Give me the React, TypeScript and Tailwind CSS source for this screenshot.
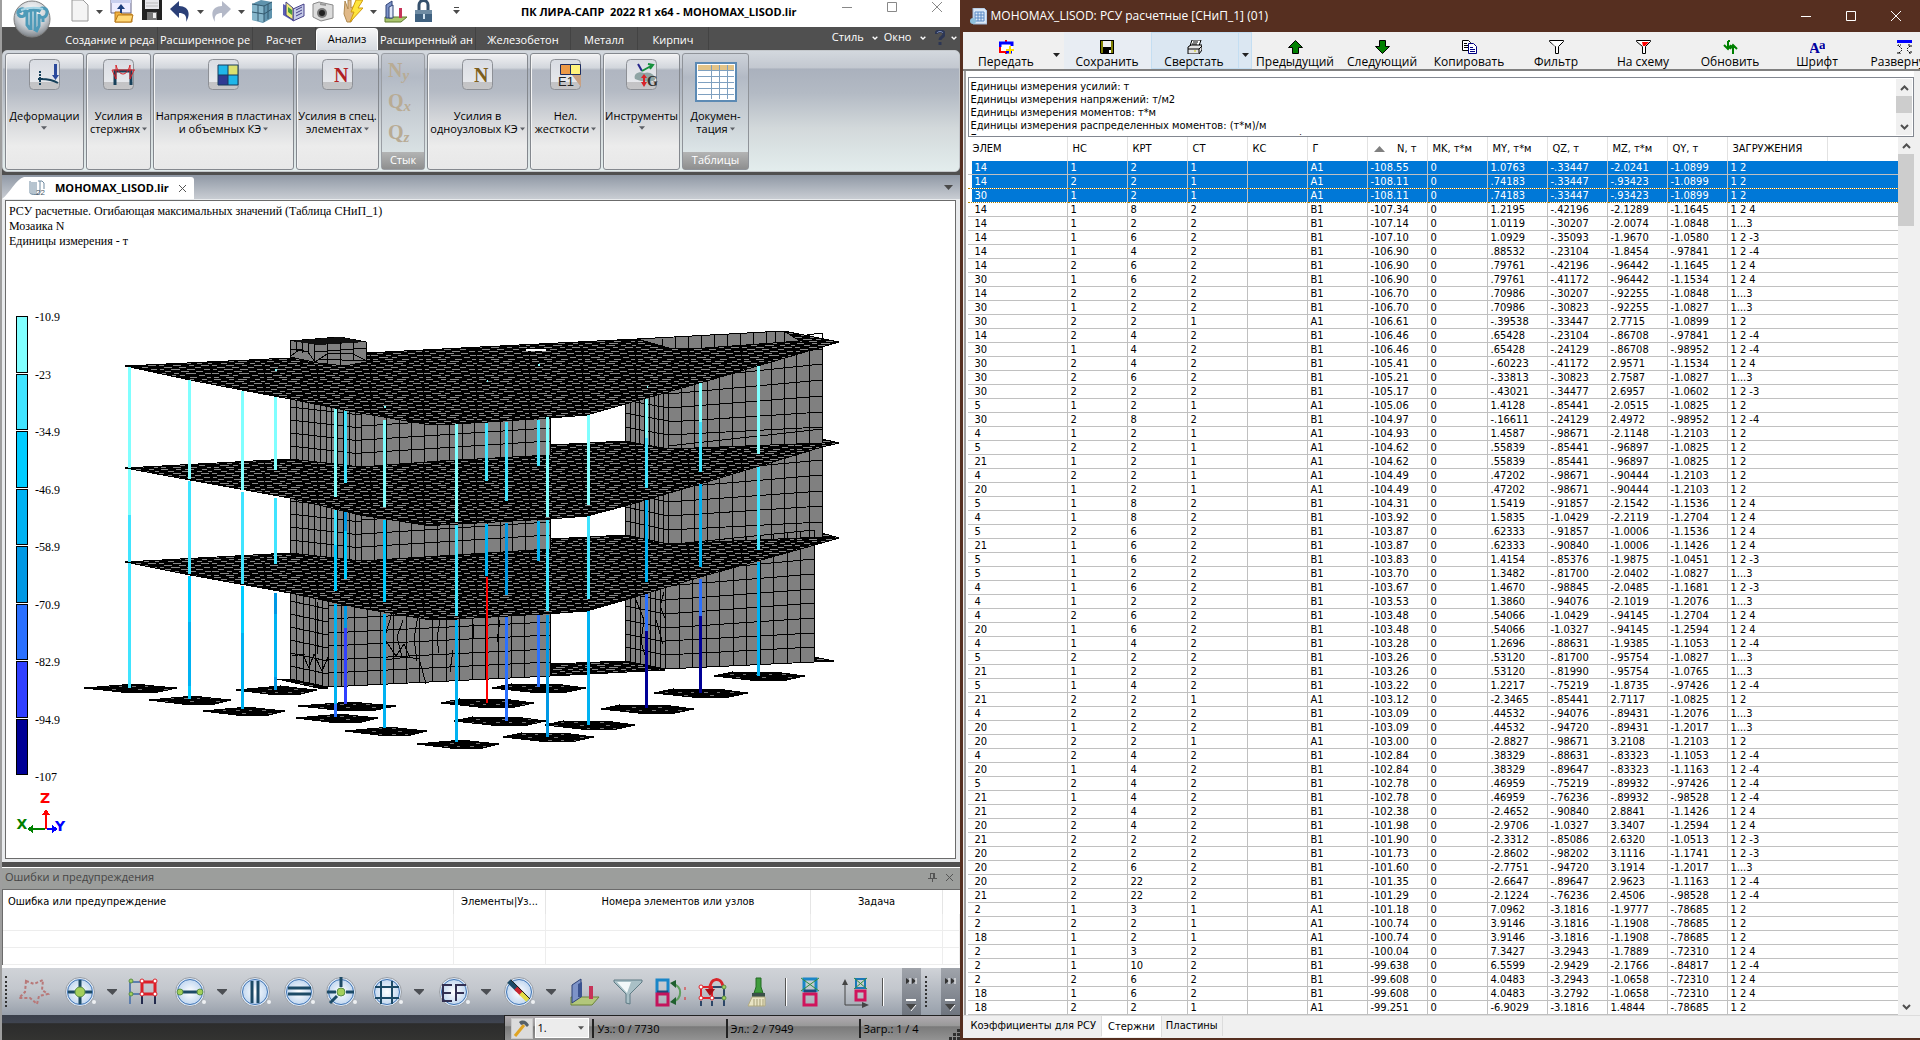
import type { ReactNode } from "react";

type Pt = [number, number];

// ---------- results table ----------

const COLUMNS = ["ЭЛЕМ", "НС", "КРТ", "СТ", "КС", "Г", "N, т", "MK, т*м", "MY, т*м", "QZ, т", "MZ, т*м", "QY, т", "ЗАГРУЖЕНИЯ"];

// элем|нс|крт|ст|г|N|MY|QZ|MZ|QY|загружения
const RAW_ROWS = `14|1|2|1|A1|-108.55|1.0763|-.33447|-2.0241|-1.0899|1 2
14|2|2|1|A1|-108.11|.74183|-.33447|-.93423|-1.0899|1 2
30|1|2|1|A1|-108.11|.74183|-.33447|-.93423|-1.0899|1 2
14|1|8|2|B1|-107.34|1.2195|-.42196|-2.1289|-1.1645|1 2 4
14|1|2|2|B1|-107.14|1.0119|-.30207|-2.0074|-1.0848|1...3
14|1|6|2|B1|-107.10|1.0929|-.35093|-1.9670|-1.0580|1 2 -3
14|1|4|2|B1|-106.90|.88532|-.23104|-1.8454|-.97841|1 2 -4
14|2|6|2|B1|-106.90|.79761|-.42196|-.96442|-1.1645|1 2 4
30|1|6|2|B1|-106.90|.79761|-.41172|-.96442|-1.1534|1 2 4
14|2|2|2|B1|-106.70|.70986|-.30207|-.92255|-1.0848|1...3
30|1|2|2|B1|-106.70|.70986|-.30823|-.92255|-1.0827|1...3
30|2|2|1|A1|-106.61|-.39538|-.33447|2.7715|-1.0899|1 2
14|2|4|2|B1|-106.46|.65428|-.23104|-.86708|-.97841|1 2 -4
30|1|4|2|B1|-106.46|.65428|-.24129|-.86708|-.98952|1 2 -4
30|2|4|2|B1|-105.41|-.60223|-.41172|2.9571|-1.1534|1 2 4
30|2|6|2|B1|-105.21|-.33813|-.30823|2.7587|-1.0827|1...3
30|2|2|2|B1|-105.17|-.43021|-.34477|2.6957|-1.0602|1 2 -3
5|1|2|1|A1|-105.06|1.4128|-.85441|-2.0515|-1.0825|1 2
30|2|8|2|B1|-104.97|-.16611|-.24129|2.4972|-.98952|1 2 -4
4|1|2|1|A1|-104.93|1.4587|-.98671|-2.1148|-1.2103|1 2
5|2|2|1|A1|-104.62|.55839|-.85441|-.96897|-1.0825|1 2
21|1|2|1|A1|-104.62|.55839|-.85441|-.96897|-1.0825|1 2
4|2|2|1|A1|-104.49|.47202|-.98671|-.90444|-1.2103|1 2
20|1|2|1|A1|-104.49|.47202|-.98671|-.90444|-1.2103|1 2
5|1|8|2|B1|-104.31|1.5419|-.91857|-2.1542|-1.1536|1 2 4
4|1|8|2|B1|-103.92|1.5835|-1.0429|-2.2119|-1.2704|1 2 4
5|2|6|2|B1|-103.87|.62333|-.91857|-1.0006|-1.1536|1 2 4
21|1|6|2|B1|-103.87|.62333|-.90840|-1.0006|-1.1426|1 2 4
5|1|6|2|B1|-103.83|1.4154|-.85376|-1.9875|-1.0451|1 2 -3
5|1|2|2|B1|-103.70|1.3482|-.81700|-2.0402|-1.0827|1...3
4|1|6|2|B1|-103.67|1.4670|-.98845|-2.0485|-1.1681|1 2 -3
4|1|2|2|B1|-103.53|1.3860|-.94076|-2.1019|-1.2076|1...3
4|2|6|2|B1|-103.48|.54066|-1.0429|-.94145|-1.2704|1 2 4
20|1|6|2|B1|-103.48|.54066|-1.0327|-.94145|-1.2594|1 2 4
4|1|4|2|B1|-103.28|1.2696|-.88631|-1.9385|-1.1053|1 2 -4
5|2|2|2|B1|-103.26|.53120|-.81700|-.95754|-1.0827|1...3
21|1|2|2|B1|-103.26|.53120|-.81990|-.95754|-1.0765|1...3
5|1|4|2|B1|-103.22|1.2217|-.75219|-1.8735|-.97426|1 2 -4
21|2|2|1|A1|-103.12|-2.3465|-.85441|2.7117|-1.0825|1 2
4|2|2|2|B1|-103.09|.44532|-.94076|-.89431|-1.2076|1...3
20|1|2|2|B1|-103.09|.44532|-.94720|-.89431|-1.2017|1...3
20|2|2|1|A1|-103.00|-2.8827|-.98671|3.2108|-1.2103|1 2
4|2|4|2|B1|-102.84|.38329|-.88631|-.83323|-1.1053|1 2 -4
20|1|4|2|B1|-102.84|.38329|-.89647|-.83323|-1.1163|1 2 -4
5|2|4|2|B1|-102.78|.46959|-.75219|-.89932|-.97426|1 2 -4
21|1|4|2|B1|-102.78|.46959|-.76236|-.89932|-.98528|1 2 -4
21|2|4|2|B1|-102.38|-2.4652|-.90840|2.8841|-1.1426|1 2 4
20|2|4|2|B1|-101.98|-2.9706|-1.0327|3.3407|-1.2594|1 2 4
21|2|2|2|B1|-101.90|-2.3312|-.85086|2.6320|-1.0513|1 2 -3
20|2|2|2|B1|-101.73|-2.8602|-.98202|3.1116|-1.1741|1 2 -3
20|2|6|2|B1|-101.60|-2.7751|-.94720|3.1914|-1.2017|1...3
20|2|22|2|B1|-101.35|-2.6647|-.89647|2.9623|-1.1163|1 2 -4
21|2|22|2|B1|-101.29|-2.1224|-.76236|2.4506|-.98528|1 2 -4
2|1|3|1|A1|-101.18|7.0962|-3.1816|-1.9777|-.78685|1 2
2|2|2|1|A1|-100.74|3.9146|-3.1816|-1.1908|-.78685|1 2
18|1|2|1|A1|-100.74|3.9146|-3.1816|-1.1908|-.78685|1 2
2|1|3|2|B1|-100.04|7.3427|-3.2943|-1.7889|-.72310|1 2 4
2|1|10|2|B1|-99.638|6.5599|-2.9429|-2.1766|-.84817|1 2 -4
2|2|6|2|B1|-99.608|4.0483|-3.2943|-1.0658|-.72310|1 2 4
18|1|6|2|B1|-99.608|4.0483|-3.2792|-1.0658|-.72310|1 2 4
18|2|2|1|A1|-99.251|-6.9029|-3.1816|1.4844|-.78685|1 2`;

const ROWS = RAW_ROWS.split("\n").map((line) => {
  const c = line.split("|");
  // КС is always blank and MK is always zero for these bars
  return [c[0], c[1], c[2], c[3], "", c[4], c[5], "0", c[6], c[7], c[8], c[9], c[10]];
});

const UNITS = `Единицы измерения усилий: т
Единицы измерения напряжений: т/м2
Единицы измерения моментов: т*м
Единицы измерения распределенных моментов: (т*м)/м
Единицы измерения распределенных перерезывающих сил: т/м`;

// ---------- small shared bits ----------

function Caret({ className = "fill-[#4a4a4a]" }: { className?: string }) {
  return (
    <svg width="7" height="4" viewBox="0 0 7 4" className={`inline-block shrink-0 ${className}`}>
      <path d="M0 0h7L3.5 4z" />
    </svg>
  );
}

function Chevron({ up = false, className = "stroke-[#505050]" }: { up?: boolean; className?: string }) {
  return (
    <svg width="9" height="6" viewBox="0 0 9 6" fill="none" strokeWidth="2" className={className}>
      <path d={up ? "M1 5l3.5-3.500L8 5" : "M1 1l3.500 3.500L8 1"} />
    </svg>
  );
}

function Icon({ w = 24, h = 24, children }: { w?: number; h?: number; children: ReactNode }) {
  return (
    <svg width={w} height={h} viewBox={`0 0 ${w} ${h}`} fill="none" className="shrink-0">
      {children}
    </svg>
  );
}

// ---------- 3D view ----------

const C = ["#80ffff", "#40e4ff", "#00ccff", "#00b2f2", "#0098e4", "#2a70ff", "#3040ff", "#000096"];
const LEGEND = ["-10.9", "-23", "-34.9", "-46.9", "-58.9", "-70.9", "-82.9", "-94.9", "-107"];

// [x, [from, to, colour index]...]
const BARS: [number, [number, number, number][]][] = [
  [275, [[397, 470, 0], [498, 564, 1], [593, 614, 4], [614, 677, 3], [677, 690, 4]]],
  [345, [[411, 483, 1], [512, 531, 4], [531, 579, 2], [606, 628, 4], [628, 704, 6]]],
  [486, [[423, 481, 1], [524, 576, 3]]],
  [506, [[422, 501, 1], [523, 595, 4], [617, 721, 5]]],
  [538, [[420, 466, 1], [521, 561, 3], [615, 687, 5]]],
  [129, [[367, 468, 0], [469, 515, 0], [515, 562, 1], [563, 688, 1]]],
  [189, [[380, 479, 0], [481, 574, 1], [576, 622, 2], [622, 686, 3], [686, 699, 2]]],
  [242, [[391, 490, 0], [492, 584, 1], [586, 633, 2], [633, 709, 3]]],
  [335, [[409, 497, 0], [510, 545, 1], [545, 591, 2], [604, 704, 3], [704, 717, 5]]],
  [384, [[420, 507, 0], [520, 602, 2], [614, 728, 3]]],
  [456, [[424, 522, 0], [525, 616, 1], [620, 742, 3]]],
  [547, [[417, 517, 0], [520, 611, 1], [615, 737, 4]]],
  [588, [[415, 505, 0], [516, 599, 1], [611, 725, 3]]],
  [646, [[399, 438, 0], [438, 488, 1], [500, 582, 3], [594, 631, 5], [631, 708, 7]]],
  [700, [[383, 422, 0], [422, 472, 1], [484, 567, 3], [579, 616, 5], [616, 693, 7]]],
  [758, [[366, 454, 0], [467, 550, 1], [562, 676, 3]]],
];

// footing pads: left, right, y
const PADS: [number, number, number][] = [
  [84, 177, 688], [149, 231, 700], [203, 285, 711], [236, 317, 690], [298, 396, 706], [296, 378, 718],
  [345, 427, 731], [417, 499, 744], [441, 534, 703], [454, 546, 721], [492, 586, 688], [503, 594, 737],
  [545, 635, 725], [601, 694, 709], [654, 748, 693], [714, 805, 676],
];

const SLABS = [
  "125,366 290,358 366,353 480,347 637,339 672,349 705,348 800,341 784,331 839,342 822,347 700,383 625,404 587,415 550,418 440,425 425,424 360,413 290,399 242,390 190,380",
  "125,468 290,459 361,467 440,461 550,455 551,445 625,441 668,449 822,443 822,439 839,443 822,447 700,484 625,506 587,516 550,519 440,525 425,525 360,515 290,498 190,480",
  "125,562 290,553 361,561 440,556 550,549 551,539 625,535 668,544 822,537 822,533 839,538 822,543 700,577 625,600 587,611 560,613 440,620 425,619 360,608 290,593 190,575",
  "551,664 625,661 665,670 551,676",
  "277,679 290,680 328,688 318,688",
  "814,657 834,661 814,662",
];

// Regular grid of finite elements on a wall with vertical sides
function mesh([x0, a0, b0]: number[], [x1, a1, b1]: number[], nx: number, ny: number) {
  let d = "";
  for (let i = 0; i <= nx; i++) {
    const t = i / nx;
    const x = Math.round(x0 + (x1 - x0) * t);
    d += `M${x} ${Math.round(a0 + (a1 - a0) * t)}V${Math.round(b0 + (b1 - b0) * t)}`;
  }
  for (let j = 0; j <= ny; j++) {
    const t = j / ny;
    d += `M${x0} ${Math.round(a0 + (b0 - a0) * t)}L${x1} ${Math.round(a1 + (b1 - a1) * t)}`;
  }
  return d;
}

const WALLS: { p: string; d: string }[] = [
  { p: "290,370 361,370 361,467 290,459", d: mesh([290, 381, 459], [361, 389, 467], 12, 6) },
  { p: "361,370 550,370 550,455 361,467", d: mesh([361, 385, 467], [550, 373, 455], 15, 6) },
  { p: "290,480 361,480 361,561 290,553", d: mesh([290, 475, 553], [361, 483, 561], 12, 6) },
  { p: "361,480 550,480 550,549 361,561", d: mesh([361, 479, 561], [550, 467, 549], 15, 6) },
  { p: "290,580 328,580 328,687 290,679", d: mesh([290, 588, 679], [328, 596, 687], 6, 7) },
  { p: "328,580 550,580 550,676 328,687", d: mesh([328, 592, 687], [550, 581, 676], 17, 7) },
  { p: "625,390 668,390 668,449 625,441", d: mesh([625, 372, 441], [668, 380, 449], 9, 5) },
  { p: "668,370 822,340 822,443 668,449", d: mesh([668, 353, 449], [822, 333, 443], 12, 7) },
  { p: "625,490 668,480 668,544 625,535", d: mesh([625, 465, 535], [668, 474, 544], 9, 5) },
  { p: "668,480 822,440 822,537 668,544", d: mesh([668, 446, 544], [822, 429, 537], 12, 7) },
  { p: "625,580 665,580 665,669 625,661", d: mesh([625, 579, 661], [665, 587, 669], 8, 6) },
  { p: "665,570 814,540 814,662 665,669", d: mesh([665, 545, 669], [814, 530, 662], 11, 9) },
];

function ModelDrawing() {
  return (
    <svg width="952" height="659" viewBox="6 201 952 659" className="absolute top-0 left-0" shapeRendering="crispEdges">
      <defs>
        <pattern id="slab" width="53" height="18" patternUnits="userSpaceOnUse">
          <rect width="53" height="18" fill="#000" />
          <path
            d="M2 1.500h7M17 1.500h5M26 1.500h9M43 1.500h5M9 3.500h6M23 3.500h9M38 3.500h5M49 3.500h4M0 5.500h5M14 5.500h8M30 5.500h5M42 5.500h8M5 7.500h8M20 7.500h7M36 7.500h6M1 9.500h4M12 9.500h9M28 9.500h8M45 9.500h6M6 11.500h6M22 11.500h8M37 11.500h7M0 13.500h7M15 13.500h5M27 13.500h10M46 13.500h6M8 15.500h9M21 15.500h5M40 15.500h6M2 17.500h5M14 17.500h8M31 17.500h7M48 17.500h4"
            stroke="#8a8a8a"
          />
        </pattern>
        <pattern id="pad" width="26" height="6" patternUnits="userSpaceOnUse">
          <rect width="26" height="6" fill="#000" />
          <path d="M2 2.500h4M15 2.500h3M8 5.500h4" stroke="#777" />
        </pattern>
      </defs>

      {WALLS.map((w) => (
        <g key={w.p}>
          <polygon points={w.p} fill="#808080" />
          <path d={w.d} stroke="#000" fill="none" />
        </g>
      ))}
      {/* irregular elements round the door openings */}
      <path
        d="M303 655l6 13 5-14 8 17 7-16M292 656l13-2M384 638l12 18 8-12 6 14M403 620l-6 17 5 20M418 615l-4 24 3 22M385 660l22-3 12 2M440 619l-3 20 2 14M453 650l-3 22M474 624l-2 30M500 620l-3 22M393 610l-8 26M420 662l6 22M636 600l8 20-3 22 6 20M664 592l-4 14 5 12M655 616l8 28"
        stroke="#000"
        fill="none"
      />
      <path d="M315 602V654M317 602V654" stroke="#000" />

      {/* roof parapet and lift shaft */}
      <polygon points="637,339 784,331 806,337 800,341 705,349 672,349" fill="#808080" stroke="#000" />
      <path d="M662 339V346M675 337V348M688 337V348M701 336V348M714 335V347M727 334V346M740 333V346M753 333V345M766 332V344M775 332V343M784 331V342" stroke="#000" />

      {SLABS.map((p) => (
        <polygon key={p} points={p} fill="url(#slab)" stroke="#000" />
      ))}

      <polygon points="290,341 340,337 366,342 366,362 345,366 318,363 290,357" fill="#808080" stroke="#000" />
      <polygon points="290,341 340,337 366,342 318,345" fill="#111" />
      <path d="M296 342V352M302 343V353M308 343V354M314 344V362M327 343V364M340 342V365M353 342V361M291 356l8-6 9 2 7 10 12-8 13-1 13 1 12 6M290 349h12M314 352l52-4M318 359l48 2" stroke="#000" fill="none" />

      <rect x="526" y="349" width="20" height="2" fill="#fff" />
      <path d="M275 370h2M384 407h2M538 365h2M487 381h1M647 387h1" stroke="#80ffff" strokeWidth="2" />

      {PADS.map(([l, r, y]) => {
        const w = r - l;
        const top: Pt = l < 430 ? [l + w * 0.55, y - 4] : [l + w * 0.2, y - 4];
        const mid: Pt = l < 430 ? [l + w * 0.75, y - 2] : [r - w * 0.25, y - 3];
        return (
          <polygon
            key={`${l}-${y}`}
            points={`${l},${y} ${top} ${mid} ${r},${y} ${r - w * 0.2},${y + 4} ${l + w * 0.4},${y + 4}`}
            fill="url(#pad)"
            stroke="#000"
          />
        );
      })}

      {BARS.map(([x, segs]) =>
        segs.map(([a, b, c]) => <rect key={`${x}-${a}`} x={x - 1} y={a} width="3" height={b - a} fill={C[c]} />),
      )}
      <rect x="486" y="577" width="2" height="126" fill="#f00" />

      {/* axis tripod */}
      <path d="M46 829V811M43 815l3-4 3 4" stroke="#f00" strokeWidth="2" fill="none" />
      <path d="M45 829H29M33 826l-4 3 4 3" stroke="#008000" strokeWidth="2" fill="none" />
      <path d="M47 829h8M52 826l4 3-4 3" stroke="#00f" strokeWidth="2" fill="none" />
      <g fontFamily="'DejaVu Sans', sans-serif" fontWeight="bold" fontSize="14" textAnchor="middle">
        <text x="45" y="803" fill="#f00">Z</text>
        <text x="22" y="829" fill="#008000">X</text>
        <text x="60" y="831" fill="#00f">Y</text>
      </g>
    </svg>
  );
}

function ModelView() {
  return (
    <div className="relative mr-[4px] mb-[3px] ml-[3px] flex-1 overflow-hidden border border-[#6b6b6b] bg-white font-['Liberation_Serif',serif] text-[12px] leading-[15px]">
      <ModelDrawing />
      <div className="relative px-[3px] pt-[3px]">
        <p>РСУ расчетные. Огибающая максимальных значений (Таблица СНиП_1)</p>
        <p>Мозаика N</p>
        <p>Единицы измерения - т</p>
      </div>
      <div className="relative mt-[67px] ml-[10px] flex items-start gap-[7px]">
        <div className="flex h-[459px] flex-col gap-px">
          {C.map((c) => (
            <div key={c} className="w-[12px] flex-1 border border-black" style={{ background: c }} />
          ))}
        </div>
        <div className="-mt-[6px] flex h-[475px] flex-col justify-between">
          {LEGEND.map((v) => (
            <div key={v}>{v}</div>
          ))}
        </div>
      </div>
    </div>
  );
}

// ---------- quick access bar ----------

const QUICK: { label: string; caret?: boolean; gap?: string; w: number; icon: ReactNode }[] = [
  { label: "Новый", caret: true, w: 18, icon: <path d="M1 0h11l5 5v16H1z" fill="#f4f4f4" stroke="#999" /> },
  {
    label: "Открыть", w: 24,
    icon: <>
      <path d="M1 0h20v13H1z" fill="#eef" stroke="#668" /><path d="M1 0h20v3H1z" fill="#c9d0ee" />
      <path d="M5 12h5l2 2h10v8H5z" fill="#f0b040" stroke="#b87818" /><path d="M8 15h15l-2 7H5z" fill="#ffd877" stroke="#b87818" />
      <path d="M11 4l4 5h-3v4h-2V9H7z" fill="#1c3f7c" />
    </>,
  },
  {
    label: "Сохранить", w: 22,
    icon: <><path d="M1 0h20v20H1z" fill="#222" /><path d="M4 0h14v9H4z" fill="#e8e8ec" /><path d="M5 3h12M5 6h12" stroke="#bbb" /><path d="M6 12h10v8H6z" fill="#777" /><path d="M12 13h3v5h-3z" fill="#eee" /></>,
  },
  { label: "Отменить", caret: true, w: 20, icon: <path d="M0 9L9 1v5c8 0 13 6 7 16 1-6-1-9-7-9v5z" fill="#2b4078" /> },
  { label: "Вернуть", caret: true, w: 20, icon: <path d="M20 9L11 1v5C3 6-2 12 4 22c-1-6 1-9 7-9v5z" fill="#b4b9c8" /> },
  {
    label: "Модель", w: 21,
    icon: <><path d="M0 4l9-4 11 2v16l-9 5-11-3z" fill="#5f93ad" /><path d="M0 4l12 2v16L0 20z" fill="#86b6cb" /><path d="M0 4l12 2 8-4M12 6v16M0 12l12 2 8-5M6 5v16M16 4v15" stroke="#33596e" /></>,
  },
  {
    label: "Книга", w: 22, gap: "ml-[3px]",
    icon: <><path d="M0 4l10 5v12L0 15z" fill="#5b5fb5" /><path d="M10 9l11-5v12l-11 5z" fill="#c6cbe8" stroke="#443f88" /><path d="M3 2l7 6v12l-7-5z" fill="#f0ec7a" stroke="#443f88" /><path d="M5 7l4 3v5l-4-3z" fill="#4a9c3e" /><path d="M13 10l6-3M13 13l6-3M13 16l6-3" stroke="#443f88" /></>,
  },
  {
    label: "Снимок", w: 22,
    icon: <><path d="M1 4l6-2 14 3v13l-12 3-8-4z" fill="#dcdcdc" stroke="#888" /><circle cx="10" cy="13" r="5" fill="#777" /><circle cx="10" cy="13" r="3" fill="#222" /><path d="M8 3l6 1v2L8 5z" fill="#999" /></>,
  },
  {
    label: "Быстрый расчет", caret: true, w: 20, gap: "ml-[2px]",
    icon: <><path d="M2 1l3 8V0h3v8l5-3-1 10-4 7H4L1 14z" fill="#e0b988" stroke="#b08a50" /><path d="M13 0h7l-5 8h5L7 22l4-10H8z" fill="#ffe53c" stroke="#d09a10" /></>,
  },
  {
    label: "Эпюра", w: 24,
    icon: <><path d="M1 17h22l-6 5H1z" fill="#a9c46c" stroke="#5e7a2c" /><path d="M2 18V5l6-4v17z" fill="#7d93c8" stroke="#2f4377" /><path d="M5 18V7l4-2v13z" fill="#dfe6f6" stroke="#2f4377" /><path d="M15 18V8h3v10z" fill="#c73358" /></>,
  },
  {
    label: "Блокировка", w: 17,
    icon: <><path d="M4 11V5a4 4 0 0 1 9 0v6" stroke="#35506c" strokeWidth="3" /><path d="M0 10h17v12H0z" fill="#3f6180" /><path d="M0 10h17v4H0z" fill="#6e8ba3" /><path d="M8 14h2v5H8z" fill="#cfe0ee" /></>,
  },
];

function TitleBar() {
  return (
    <header className="flex h-[27px] items-center bg-white pl-[69px]">
      <div className="absolute top-0 left-[11px] z-10 h-[38px] w-[38px]">
        <svg width="38" height="38" viewBox="0 0 38 38">
          <defs>
            <radialGradient id="orb" cx="50%" cy="30%" r="75%">
              <stop offset="0" stopColor="#fff" />
              <stop offset="0.6" stopColor="#c9cdd2" />
              <stop offset="1" stopColor="#6d7379" />
            </radialGradient>
          </defs>
          <circle cx="19" cy="19" r="18" fill="url(#orb)" stroke="#7f7f7f" />
          <path d="M5 14c-1-6 7-7 8-2 5-3 9-3 13-1 2-5 9-3 8 2-1 6-7 5-8 2M5 14c2 4 7 3 7-1s-5-3-5 0M14 12v13l3 4M18 11v19M22 11v20M26 14v12l-3 6M30 17v5" fill="none" stroke="#4e9ab8" strokeWidth="3" />
          <path d="M8 10c8-3 14-3 22-1" fill="none" stroke="#a8d6e6" strokeWidth="2" />
        </svg>
      </div>
      <div className="flex h-full shrink-0 items-start gap-[7px]">
        {QUICK.map((q) => (
          <button key={q.label} aria-label={q.label} className={`flex items-center gap-[7px] ${q.gap ?? ""}`}>
            <Icon w={q.w} h={23}>{q.icon}</Icon>
            {q.caret && <Caret />}
          </button>
        ))}
        <button aria-label="Настройка панели" className="mt-[7px] ml-[14px] flex flex-col items-center gap-[2px]">
          <span className="h-px w-[5px] bg-[#4a4a4a]" />
          <Caret />
        </button>
      </div>
      <h1 className="ml-auto shrink-0 pr-[45px] pb-[4px] text-[11px] leading-[20px] font-bold whitespace-pre">ПК ЛИРА-САПР  2022 R1 x64 - MOHOMAX_LISOD.lir</h1>
      <div className="flex h-full shrink-0 items-start gap-[34px] pt-[2px] pr-[17px]">
        <button aria-label="Свернуть"><Icon w={11} h={11}><path d="M0 5.500h10" stroke="#888" /></Icon></button>
        <button aria-label="Развернуть"><Icon w={11} h={11}><path d="M.5.500h9v9h-9z" stroke="#888" /></Icon></button>
        <button aria-label="Закрыть"><Icon w={11} h={11}><path d="M0 0l10 10M10 0L0 10" stroke="#888" /></Icon></button>
      </div>
    </header>
  );
}

// ---------- ribbon ----------

const TABS: [string, string][] = [
  ["Создание и реда", "w-[95px]"],
  ["Расширенное ре", "w-[95px]"],
  ["Расчет", "w-[63px]"],
  ["Анализ", "w-[62px]"],
  ["Расширенный ан", "w-[98px]"],
  ["Железобетон", "w-[95px]"],
  ["Металл", "w-[67px]"],
  ["Кирпич", "w-[71px]"],
];

const TILE = <rect x="0.500" y="0.500" width="30" height="30" rx="4" fill="url(#tile)" stroke="#8d9096" />;

const GROUPS: { lines: string[]; width: string; inlineCaret?: boolean; icon: ReactNode }[] = [
  {
    lines: ["Деформации"], width: "w-[79px]",
    icon: <>{TILE}<path d="M11 12V27" stroke="#17405a" strokeWidth="2" strokeDasharray="2 1" /><path d="M12 20c8 0 12 1 17 4M9 20h5" stroke="#17405a" strokeWidth="2" /><path d="M25 5h3v11h2l-3.500 5L23 16h2z" fill="#2c4a9c" /></>,
  },
  {
    lines: ["Усилия в", "стержнях"], inlineCaret: true, width: "w-[65px]",
    icon: <>{TILE}<path d="M12 26V12H28V26" stroke="#17405a" strokeWidth="3" /><path d="M9 11h23M9 11l4 9V6M31 11l-4 9V6M13 6c3 12 11 12 14 0" stroke="#d8242a" /></>,
  },
  {
    lines: ["Напряжения в пластинах", "и объемных КЭ "], inlineCaret: true, width: "w-[141px]",
    icon: <>{TILE}<path d="M10 6h20v20H10z" fill="#1fb6e8" /><path d="M20 6h10v10H20z" fill="#dbe070" /><path d="M10 16h10v10H10z" fill="#2f3a92" /><path d="M10 6h20v20H10zM20 6v20M10 16h20" stroke="#173a5c" /></>,
  },
  {
    lines: ["Усилия в спец.", "элементах"], inlineCaret: true, width: "w-[83px]",
    icon: <>{TILE}<text x="12" y="23" fontFamily="'Liberation Serif', serif" fontWeight="bold" fontSize="20" fill="#b11f24">N</text></>,
  },
];

const GROUPS_RIGHT: typeof GROUPS = [
  {
    lines: ["Усилия в", "одноузловых КЭ "], inlineCaret: true, width: "w-[101px]",
    icon: <>{TILE}<text x="12" y="23" fontFamily="'Liberation Serif', serif" fontWeight="bold" fontSize="20" fill="#7d5f1c">N</text></>,
  },
  {
    lines: ["Нел.", "жесткости "], inlineCaret: true, width: "w-[71px]",
    icon: <>{TILE}<path d="M10.500 5.500h10v10h-10z" fill="#ec9a48" stroke="#1d2c60" /><path d="M20.500 5.500h10v10h-10z" fill="#fff27c" stroke="#1d2c60" /><path d="M22 16l9 12V16z" fill="#c9a183" /><text x="8" y="27" fontFamily="'Liberation Sans', sans-serif" fontSize="13" fill="#222">E1</text></>,
  },
  {
    lines: ["Инструменты"], width: "w-[77px]",
    icon: <>{TILE}<path d="M9 20c-2-5 4-8 9-6 6-2 11 2 11 6s-14 3-20 0z" fill="#8fa5a5" /><path d="M16 12l-4-7" stroke="#26268c" strokeWidth="2" /><path d="M16 12l9-5M22 5l5 1-3 4" stroke="#15903c" strokeWidth="2" /><path d="M18 15l3 4h-2v4h2l-3 5-3-5h2v-4h-2z" fill="#d8242a" /><text x="21" y="27" fontFamily="'Liberation Serif', serif" fontWeight="bold" fontSize="14" fill="#333">G</text></>,
  },
];

const CARD = "flex shrink-0 flex-col items-center rounded-[3px] border border-[#84888e] bg-[linear-gradient(#f2f2f4_0,#d2d6dc_12%,#b0b6c1_14%,#b4bac4_32%,#d6d8db_58%,#ececec_80%,#e8e8e8)] pt-[5px] text-center leading-[13px] shadow-[inset_1px_1px_0_#f4f4f4]";

function RibbonGroup({ g }: { g: (typeof GROUPS)[number] }) {
  return (
    <button className={`${CARD} ${g.width}`}>
      <Icon w={32} h={31}>{g.icon}</Icon>
      <span className="mt-[19px] flex flex-col items-center whitespace-nowrap">
        {g.lines.map((l, i) => (
          <span key={l} className="flex items-center gap-[2px]">
            {l}
            {g.inlineCaret && i === g.lines.length - 1 && <Caret className="w-[5px] fill-[#5d6066]" />}
          </span>
        ))}
        {!g.inlineCaret && <Caret className="mt-[4px] w-[6px] fill-[#5d6066]" />}
      </span>
    </button>
  );
}

const FORCE_LABELS = [["N", "y"], ["Q", "x"], ["Q", "z"]];

function Ribbon() {
  return (
    <div className="bg-[#505050] text-[11px]">
      <svg width="0" height="0" className="absolute">
        <defs>
          <linearGradient id="tile" x1="0" y1="0" x2="0" y2="1">
            <stop offset="0" stopColor="#d9dce2" />
            <stop offset="0.740" stopColor="#e6e8ec" />
            <stop offset="0.750" stopColor="#c3c3c5" />
            <stop offset="1" stopColor="#c6c6c8" />
          </linearGradient>
        </defs>
      </svg>
      <nav className="flex h-[23px] items-stretch pl-[61px] text-white">
        {TABS.map(([t, w]) =>
          t === "Анализ" ? (
            <button key={t} className={`${w} mt-px shrink-0 rounded-t-[4px] border border-b-0 border-white bg-[linear-gradient(#f6f6f6,#d5dae0)] text-black`}>{t}</button>
          ) : (
            <button key={t} className={`${w} shrink-0 border-r border-[#434343] pt-[2px] leading-[21px] whitespace-nowrap`}>{t}</button>
          ),
        )}
        <div className="ml-auto flex items-center gap-[6px] pr-[3px] pb-[2px]">
          <button className="flex items-center gap-[8px]">Стиль <Chevron className="w-[6px] stroke-white" /></button>
          <button className="flex items-center gap-[8px]">Окно <Chevron className="w-[6px] stroke-white" /></button>
          <button aria-label="Справка" className="flex items-center gap-[6px] pl-[3px]">
            <Icon w={10} h={15}>
              <path d="M1 4c0-4 8-4 8 0 0 3-4 3-4 6M5 12v3" stroke="#2c3654" strokeWidth="3" />
              <path d="M2 3c1-2 5-2 6 0" stroke="#7f93c4" />
            </Icon>
            <Chevron className="w-[6px] stroke-white" />
          </button>
        </div>
      </nav>
      <div className="flex h-[122px] items-stretch gap-[2px] rounded-[5px] border border-[#c4c8cc] bg-[linear-gradient(#d3d8de_0,#c3c8d0_14%,#aab1bd_15%,#b3bac4_35%,#d3d9db_65%,#e3eded)] px-[2px] pt-[2px] pb-px">
        {GROUPS.map((g) => <RibbonGroup key={g.lines[0]} g={g} />)}
        <div className="flex w-[44px] shrink-0 flex-col rounded-[3px] border border-[#9a9ea4] bg-[linear-gradient(#c3c8d0,#b3bac5_20%,#ccd3d8_60%,#e0eaea)]">
          <div className="flex flex-1 flex-col font-['Liberation_Serif',serif] font-bold text-[#b8ab94]">
            {FORCE_LABELS.map(([a, b]) => (
              <button key={a + b} disabled className="h-[31px] pl-[6px] text-left text-[20px] leading-[26px]">
                {a}<sub className="text-[15px] italic">{b}</sub>
              </button>
            ))}
          </div>
          <div className="h-[17px] bg-[linear-gradient(#b3b4b4,#8e8f8f)] text-center leading-[16px] text-white">Стык</div>
        </div>
        {GROUPS_RIGHT.map((g) => <RibbonGroup key={g.lines[0]} g={g} />)}
        <div className="flex w-[67px] shrink-0 flex-col rounded-[3px] border border-[#8f9399] bg-[linear-gradient(#cdd2d9,#b3bac5_20%,#ccd3d8_60%,#e6f0f0)] text-center leading-[13px]">
          <button className="flex flex-1 flex-col items-center pt-[8px]">
            <Icon w={42} h={40}>
              <path d="M1 1h40v38H1z" fill="#fff" stroke="#5c8ab4" strokeWidth="2" />
              <path d="M3 3h36v5H3z" fill="#e3c488" />
              <path d="M3 8.500h36M3 14.500h36M3 20.500h36M3 26.500h36M3 32.500h36M16.500 3v34M24.500 3v34M32.500 3v34" stroke="#7ea0c0" />
            </Icon>
            <span className="mt-[7px]">Докумен-</span>
            <span className="flex items-center gap-[2px]">тация <Caret className="w-[5px] fill-[#5d6066]" /></span>
          </button>
          <div className="h-[17px] bg-[linear-gradient(#b3b4b4,#8e8f8f)] leading-[16px] text-white">Таблицы</div>
        </div>
      </div>
      <div className="h-[3px]" />
    </div>
  );
}

function DocTabs() {
  return (
    <div className="flex h-[24px] items-end bg-[linear-gradient(#8f98a5,#c9cdd3)] pt-[2px] text-[11px]">
      <svg width="22" height="22" viewBox="0 0 22 22" className="shrink-0"><path d="M0 22C8 16 14 2 22 0V22z" fill="#fff" /></svg>
      <div className="flex h-[22px] w-[170px] items-center rounded-tr-[3px] bg-white pr-[7px] pl-[4px]">
        <Icon w={17} h={16}>
          <path d="M2 1v12c0 2 10 2 10 0V1M4 2v12M6 2v12M8 2v12M10 1h4l2 2v6" stroke="#6f8aa0" />
          <text x="8" y="15" fontSize="8" fontFamily="'Liberation Sans', sans-serif" fill="#456">22</text>
        </Icon>
        <span className="ml-[10px] font-bold">MOHOMAX_LISOD.lir</span>
        <button aria-label="Закрыть вкладку" className="ml-auto"><Icon w={9} h={9}><path d="M1 1l7 7M8 1L1 8" stroke="#555" /></Icon></button>
      </div>
      <button aria-label="Список вкладок" className="mr-[7px] mb-[9px] ml-auto"><Icon w={9} h={5}><path d="M0 0h9L4.500 5z" fill="#4a4a4a" /></Icon></button>
    </div>
  );
}

// ---------- errors panel ----------

function ErrorsPanel() {
  return (
    <section className="border-t-[5px] border-[#505050] bg-white">
      <div className="flex h-[22px] items-center border-t border-white bg-[#9c9e9c] pr-[6px] pb-[2px] pl-[3px] text-[11px] text-[#454545]">
        <h2>Ошибки и предупреждения</h2>
        <button aria-label="Закрепить" className="ml-auto"><Icon w={9} h={9}><path d="M2 0.500h5M2.500 0v5M6.500 0v5M5.500 0v5M0 5.500h9M4.500 6v3" stroke="#555" /></Icon></button>
        <button aria-label="Закрыть панель" className="ml-[8px]"><Icon w={9} h={9}><path d="M1 1l7 7M8 1L1 8" stroke="#555" /></Icon></button>
      </div>
      <table className="w-full table-fixed border-separate border-spacing-0 border-t border-l border-[#6b6b6b] font-['DejaVu_Sans_Condensed','DejaVu_Sans',sans-serif] text-[11px]">
        <colgroup>
          <col className="w-[451px]" />
          <col className="w-[92px]" />
          <col className="w-[265px]" />
          <col className="w-[132px]" />
          <col />
        </colgroup>
        <thead>
          <tr>
            {["Ошибка или предупреждение", "Элементы|Уз...", "Номера элементов или узлов", "Задача", ""].map((t, i) => (
              <th key={t} className={`h-[24px] border-r border-[#e5e5e5] p-0 font-normal whitespace-nowrap last:border-r-0 ${i === 0 ? "pl-[5px] text-left" : "text-center"}`}>{t}</th>
            ))}
          </tr>
        </thead>
        <tbody>
          {[0, 1, 2].map((r) => (
            <tr key={r}>
              {[0, 1, 2, 3, 4].map((c) => <td key={c} className="h-[17px] border-r border-b border-[#ededed] p-0" />)}
            </tr>
          ))}
        </tbody>
      </table>
      <div className="h-[3px]" />
    </section>
  );
}

// ---------- bottom toolbar ----------

function Round({ children }: { children: ReactNode }) {
  return (
    <Icon w={32} h={32}>
      <circle cx="16" cy="16" r="14.500" fill="#dce8f6" stroke="#9a9da2" />
      <circle cx="16" cy="16" r="12.500" fill="url(#glass)" stroke="#3f74b4" />
      {children}
      <circle cx="30" cy="26" r="2" fill="#eef0f2" />
    </Icon>
  );
}

const NODE = (x: number, y: number, r: number) => <circle cx={x} cy={y} r={r} fill="#a4cf5a" stroke="#5a8f48" />;
const INK = "#1c4a66";

const TOOLS: { label: string; x: string; caret?: boolean; icon: ReactNode }[] = [
  { label: "Полигон", x: "ml-[11px]", icon: <Icon w={32} h={32}><path d="M8 5l8 3 9-4-1 10 6 4-9 2-2 8-7-6H1l6-6z" stroke="#b87878" strokeWidth="2" strokeDasharray="3 2" /></Icon> },
  { label: "Выбор узлов", x: "ml-[14px]", caret: true, icon: <Round><path d="M16 4V28M4 16H28" stroke={INK} strokeWidth="3" />{NODE(16, 16, 5)}</Round> },
  {
    label: "Выбор блока", x: "ml-[11px]",
    icon: <Icon w={30} h={32}><path d="M2 6H14M2 18H14M2 6V28" stroke="#5d7fae" strokeWidth="2" /><path d="M14 18V28M27 18V28" stroke="#222a4c" strokeWidth="2" /><path d="M14 6H27V18H14z" stroke="#dd2028" strokeWidth="3" />{NODE(3, 5, 2)}{NODE(3, 18, 2)}{[[14, 5], [27, 5], [14, 18], [27, 18]].map(([x, y]) => <circle key={`${x}${y}`} cx={x} cy={y} r="2" fill="#fff" stroke="#dd2028" />)}</Icon>,
  },
  { label: "Выбор стержней", x: "ml-[16px]", caret: true, icon: <Round><path d="M7 16H25" stroke={INK} strokeWidth="3" />{NODE(6, 16, 3)}{NODE(26, 16, 3)}</Round> },
  { label: "Вертикальные", x: "ml-[12px]", icon: <Round><path d="M13 5V27M19 5V27" stroke={INK} strokeWidth="3" /></Round> },
  { label: "Горизонтальные", x: "ml-[12px]", icon: <Round><path d="M5 12H28M5 18H28" stroke={INK} strokeWidth="3" /></Round> },
  { label: "Вокруг узла", x: "ml-[10px]", icon: <Round><path d="M16 1V11M2 16H11M21 16H29M12 20L5 27" stroke={INK} strokeWidth="3" />{NODE(16, 16, 4)}</Round> },
  { label: "Пластины", x: "ml-[14px]", caret: true, icon: <Round><path d="M10 5V28M21 5V28M4 11H28M4 22H28" stroke={INK} strokeWidth="2" /></Round> },
  { label: "Жесткости", x: "ml-[14px]", caret: true, icon: <Round><path d="M14 9H5V25H14M5 17H13M28 9H18V25M18 17H26" stroke="#312f52" strokeWidth="2" /></Round> },
  { label: "Свойства", x: "ml-[12px]", caret: true, icon: <Round><path d="M6 5l9 9" stroke={INK} strokeWidth="5" /><path d="M13 12l6 6" stroke="#c72530" strokeWidth="5" /><path d="M18 17l7 7" stroke="#e3dc45" strokeWidth="5" /><path d="M8 4L27 23" stroke="#222" /></Round> },
];

const TOOLS_RIGHT: typeof TOOLS = [
  { label: "Эпюры", x: "ml-[14px]", icon: <Icon w={30} h={30}><path d="M1 20h28l-7 8H1z" fill="#b3c77c" stroke="#6c8438" /><path d="M2 26V8l9-6v18z" fill="#7d93c8" stroke="#2f4377" /><path d="M8 20V7l4-2v15z" fill="#3b5390" /><path d="M19 22V9h4v13z" fill="#c73358" /></Icon> },
  { label: "Фильтр", x: "ml-[13px]", icon: <Icon w={30} h={28}><path d="M1 2h28v2L17 16v10l-4-1V16L1 4z" fill="#a9c0c6" stroke="#5f7b85" /><path d="M4 4h14l-4 11z" fill="#f2f8f9" /></Icon> },
  { label: "Инверсия", x: "ml-[11px]", icon: <Icon w={32} h={30}><path d="M3 16V3h11v13" stroke="#1a86c8" strokeWidth="3" /><path d="M3 15h11" stroke="#1c4a7a" strokeWidth="3" /><path d="M3 17v11h11V17z" stroke="#c4145c" strokeWidth="3" /><path d="M19 7c9 2 10 14 0 18" stroke="#5f9f5e" strokeWidth="2" /><path d="M16 6l6-3v8zM16 25l6-5v8z" fill="#1f5f2e" /><path d="M31 10v3M31 20v3" stroke="#d22" /></Icon> },
  { label: "Обновить блок", x: "ml-[11px]", icon: <Icon w={32} h={30}><path d="M14 10H27V21H14M4 24v5M15 24v5M27 21v8" stroke="#2c4668" strokeWidth="2" /><path d="M4 10h11v11H4z" stroke="#e02028" strokeWidth="2" /><path d="M26 9C24 0 13 0 13 12" stroke="#d8242a" strokeWidth="3" /><path d="M8 12h10l-5 7z" fill="#a51118" />{NODE(27, 10, 2)}{NODE(27, 21, 2)}{[[4, 10], [4, 21], [15, 21]].map(([x, y]) => <circle key={`${x}${y}`} cx={x} cy={y} r="2" fill="#fff" stroke="#dd2028" />)}</Icon> },
  { label: "Очистить", x: "ml-[12px]", icon: <Icon w={32} h={30}><path d="M15 1h5v9l2 6h-9l2-6z" fill="#3f9c3c" stroke="#246b24" /><path d="M11 16h13v4H11z" fill="#3a4f48" /><path d="M11 20h13v9H7z" fill="#e9e4c4" stroke="#b3ac80" /><path d="M13 22v7M16 22v7M19 22v7M22 22v7" stroke="#a59f78" /></Icon> },
];

const TOOLS_END: typeof TOOLS = [
  { label: "Скрыть", x: "ml-[13px]", icon: <Icon w={20} h={30}><path d="M4 15V2h12v13" stroke="#1a86c8" strokeWidth="3" /><path d="M4 14h12" stroke="#1c4a7a" strokeWidth="3" /><path d="M4 17v11h12V17z" stroke="#d0145c" strokeWidth="3" /><path d="M1 1l18 13M19 1L1 14" stroke="#2f8f3e" /></Icon> },
  { label: "Оси фрагмента", x: "ml-[22px]", icon: <Icon w={28} h={32}><path d="M3 8V29H22" stroke="#444" /><path d="M0 9l3-6 3 6zM20 26l7 3-7 3z" fill="#444" /><path d="M14 3h9v9h-9z" stroke="#1a78b8" strokeWidth="2" /><path d="M14 15h9v9h-9z" stroke="#d0145c" strokeWidth="3" /><path d="M12 2l13 11M25 2L12 13" stroke="#2f8f3e" /></Icon> },
];

function ToolButton({ t }: { t: (typeof TOOLS)[number] }) {
  return (
    <button aria-label={t.label} className={`flex shrink-0 items-center ${t.x}`}>
      {t.icon}
      {t.caret && <span className="ml-[11px] flex w-[10px]"><Icon w={10} h={6}><path d="M0 0h10v1L5.500 6 0 1z" fill="#4c4f54" /></Icon></span>}
    </button>
  );
}

function Overflow() {
  return (
    <button aria-label="Другие кнопки" className="flex w-[19px] shrink-0 flex-col items-center justify-between bg-[linear-gradient(#a0a4ab,#6f757f)] pt-[9px] pb-[4px]">
      <Icon w={11} h={8}><path d="M0 1l4 3-4 3zM6 1l4 3-4 3z" fill="#333" /><path d="M4 1v6M10 1v6" stroke="#fff" /></Icon>
      <Icon w={11} h={12}><path d="M0 1h10" stroke="#fff" strokeWidth="2" /><path d="M0 5h10l-5 6z" fill="#444" /><path d="M10 6l-5 6" stroke="#fff" /></Icon>
    </button>
  );
}

function BottomToolbar() {
  return (
    <div className="flex h-[47px] items-stretch overflow-hidden bg-[linear-gradient(#d0d3d8,#c3c7cd_45%,#98a0ab)]">
      <svg width="0" height="0" className="absolute">
        <defs>
          <radialGradient id="glass"><stop offset="0" stopColor="#fff" /><stop offset="1" stopColor="#c3d8f0" /></radialGradient>
        </defs>
      </svg>
      <div className="my-[8px] ml-[3px] border-l-2 border-dotted border-[#333]" />
      <div className="flex flex-1 items-center overflow-hidden">
        {TOOLS.map((t) => <ToolButton key={t.label} t={t} />)}
        {TOOLS_RIGHT.map((t) => <ToolButton key={t.label} t={t} />)}
        <div className="ml-[12px] h-[28px] border-r border-l border-r-white border-l-[#555]" />
        {TOOLS_END.map((t) => <ToolButton key={t.label} t={t} />)}
        <div className="ml-[12px] h-[28px] border-r border-l border-r-white border-l-[#555]" />
      </div>
      <Overflow />
      <div className="flex w-[20px] shrink-0 bg-[linear-gradient(#d0d3d8,#98a0ab)]"><div className="my-[8px] ml-[4px] border-l-2 border-dotted border-[#333]" /></div>
      <Overflow />
    </div>
  );
}

function StatusBar() {
  return (
    <footer className="flex h-[25px] bg-[linear-gradient(#3a3f4a,#3f4450_30%,#2c2c2c_35%,#333331)] text-[11px]">
      <div className="ml-auto flex w-[456px] items-center border-t border-l border-[#222] bg-[linear-gradient(#b0abb0,#999_40%,#7a7a7a_45%,#939393)] pl-[6px]">
        <button aria-label="Инструмент" className="flex h-[21px] w-[22px] items-center justify-center border border-[#c8c8c8] bg-[#dcdcdc]">
          <Icon w={18} h={18}><path d="M11 6L2 17" stroke="#e0a422" strokeWidth="3" /><path d="M6 3c4-3 8-1 10 3l-2 2-3-3-3 1z" fill="#556068" /></Icon>
        </button>
        <div className="relative ml-[2px] flex items-center">
          <select aria-label="Номер загружения" className="h-[20px] w-[54px] appearance-none border border-white bg-[#ececec] pl-[2px] text-[11px] leading-[18px]">
            <option>1.</option>
          </select>
          <span className="pointer-events-none absolute right-[5px] flex"><Caret className="w-[6px] fill-[#555]" /></span>
        </div>
        <p className="ml-[3px] h-[19px] w-[134px] border-l-2 border-[#222] pl-[4px] leading-[19px]">Уз.: 0 / 7730</p>
        <p className="h-[19px] w-[133px] border-l-2 border-[#222] pl-[3px] leading-[19px]">Эл.: 2 / 7949</p>
        <p className="h-[19px] border-l-2 border-[#222] pl-[3px] leading-[19px]">Загр.: 1 / 4</p>
        <span className="mt-auto ml-auto flex"><Icon w={11} h={11}><path d="M8 0h3v3H8zM4 4h3v3H4zM8 4h3v3H8zM0 8h3v3H0zM4 8h3v3H4zM8 8h3v3H8z" fill="#2f2f2f" /></Icon></span>
      </div>
    </footer>
  );
}

function MainWindow() {
  return (
    <main className="relative flex min-w-0 flex-1 flex-col overflow-hidden border-l-2 border-[#9e9e9e] bg-[#e9ebed]">
      <TitleBar />
      <Ribbon />
      <DocTabs />
      <div className="flex flex-1 flex-col pt-px">
        <ModelView />
      </div>
      <ErrorsPanel />
      <BottomToolbar />
      <StatusBar />
    </main>
  );
}

// ---------- report window ----------

const ACTIONS: [string, ReactNode][] = [
  ["Передать", <><path d="M0 2h14v11H0z" fill="#fff" /><path d="M7 0v4M1 7v5h6M7 12v3" stroke="#f00" strokeWidth="2" /><path d="M1 7V3h12v3M7 12h6" stroke="#00f" strokeWidth="3" /><path d="M11 6v8M7 10h8" stroke="#fd0" strokeWidth="2" /></>],
  ["Сохранить", <><path d="M0 0h14v14H1L0 13z" fill="#000" /><path d="M1 1h2v12H1zM11 1h2v12h-2z" fill="#808000" /><path d="M3 1h8v6H3z" fill="#f0f0f0" /><path d="M9 10h2v3H9z" fill="#fff" /></>],
  ["Сверстать", <><path d="M5 0h9l-2 6H3z" fill="#fff" stroke="#000" /><path d="M1 7l3-2h11v5l-3 4H1z" fill="#e4e4e4" stroke="#000" /><path d="M1 9h11l3-3M6 2h5M5 4h5M12 9v4" stroke="#000" /><path d="M7 11h2" stroke="#cc0" /></>],
  ["Предыдущий", <path d="M7.500.500l7 7h-4v6h-6v-6h-4z" fill="#008000" stroke="#000" />],
  ["Следующий", <path d="M7.500 13.500l7-7h-4v-6h-6v6h-4z" fill="#008000" stroke="#000" />],
  ["Копировать", <><path d="M.5.500h6l2 2v8h-8z" fill="#fff" stroke="#000" /><path d="M2 3.500h3M2 5.500h4M2 7.500h4" stroke="#000" /><path d="M6.500 3.500h5l3 3v7h-8z" fill="#fff" stroke="#000080" /><path d="M8 7.500h3M8 9.500h5M8 11.500h5" stroke="#000080" /></>],
  ["Фильтр", <><path d="M.5.500h14v1l-5 5v7h-3v-7l-6-5z" fill="#fff" stroke="#000" /><path d="M2 2l4 4" stroke="#bbb" /></>],
  ["На схему", <><path d="M.5.500h14v1l-5 5v7h-3v-7l-6-5z" fill="#fff" stroke="#000" /><path d="M6 2h7L9 6H7z" fill="#f00" /></>],
  ["Обновить", <path d="M5 1v7M1 5l4 4 3-4M10 13V6M7 9l3-4 4 4M5 1h2M9 13h2" stroke="#008000" strokeWidth="2" />],
  ["Шрифт", <g fontFamily="'Liberation Serif', serif" fontWeight="bold" fill="#0000a0"><text x="-1" y="13" fontSize="15">A</text><text x="9" y="9" fontSize="13">a</text></g>],
  ["Развернуть", <><path d="M0 0h15v3H0z" fill="#00f" /><path d="M1 6V5h3M11 5h3v3M14 11v3h-3M4 14H1v-3M2 6l3 3M13 6l-3 3M2 13l3-3M13 13l-3-3" stroke="#000" strokeDasharray="2 1" /></>],
];

function ReportToolbar() {
  return (
    <div className="flex h-[39px] overflow-hidden border-b-2 border-[#808080] bg-[#f0f0f0] text-[12px]">
      {ACTIONS.map(([label, icon], i) => (
        <div key={label} className={`flex shrink-0 ${i === 1 ? "bg-[#e8edf3]" : i === 2 ? "bg-[#dbe7f2] shadow-[inset_0_0_0_1px_#c4def2]" : ""}`}>
          <button className="flex w-[87px] flex-col items-center pt-[8px] leading-[14px] whitespace-nowrap">
            <Icon w={15} h={14}>{icon}</Icon>
            <span className="mt-px">{label}</span>
          </button>
          {(i === 0 || i === 2) && (
            <button aria-label={`${label}: варианты`} className={`flex w-[14px] items-center justify-center pt-[8px] ${i === 2 ? "border-l border-[#c4def2]" : ""}`}>
              <Caret className="fill-[#222]" />
            </button>
          )}
        </div>
      ))}
    </div>
  );
}

function ScrollBar({ thumb }: { thumb: string }) {
  return (
    <div className="flex w-[16px] shrink-0 flex-col items-center bg-[#f0f0f0]">
      <button aria-label="Вверх" className="flex h-[17px] items-center"><Chevron up /></button>
      <div className={`w-full bg-[#cdcdcd] ${thumb}`} />
      <button aria-label="Вниз" className="mt-auto flex h-[17px] items-center"><Chevron /></button>
    </div>
  );
}

function cellClass(r: number, i: number) {
  const bottom = r === 1 || r === 2 ? "border-b-[#b08000] [border-bottom-style:dotted]" : "border-b-[#c0c0c0]";
  const right = i < 12 ? "border-r border-r-[#c0c0c0]" : "";
  return `h-[14px] border-b p-0 whitespace-nowrap ${bottom} ${right} ${i === 0 ? "pl-[4px]" : ""}`;
}

function ResultsTable() {
  return (
    <table className="min-w-0 flex-1 table-fixed border-separate border-spacing-0 leading-[13px]">
      <colgroup>
        <col className="w-[100px]" />
        {COLUMNS.slice(1, 12).map((c) => <col key={c} className="w-[60px]" />)}
        <col />
      </colgroup>
      <thead>
        <tr>
          {COLUMNS.map((c, i) => (
            <th key={c} className={`h-[24px] p-0 text-left font-normal whitespace-nowrap ${i === 12 ? "" : "border-r border-[#e2e2e2]"}`}>
              {i === 6 ? (
                <span className="flex items-center justify-between pr-[10px] pl-[6px] leading-[24px]">
                  <Icon w={11} h={6}><path d="M0 6L5.500 0 11 6z" fill="#808080" /></Icon>
                  {c}
                </span>
              ) : (
                <span className={`block pl-[5px] leading-[24px] ${i === 12 ? "w-[100px] border-r border-[#e2e2e2]" : ""}`}>{c}</span>
              )}
            </th>
          ))}
        </tr>
      </thead>
      <tbody>
        {ROWS.map((row, r) => (
          <tr key={r} className={r < 3 ? "text-white" : ""}>
            {row.map((v, i) => (
              <td key={i} className={cellClass(r, i)}>
                <span className={`block h-[13px] pl-[3px] ${r < 3 ? "bg-[#0078d7]" : ""}`}>{v}</span>
              </td>
            ))}
          </tr>
        ))}
      </tbody>
    </table>
  );
}

function ReportWindow() {
  return (
    <section className="flex min-w-0 flex-1 flex-col overflow-hidden border-b-2 border-l-[3px] border-[#562f20] bg-[#f0f0f0] font-['DejaVu_Sans_Condensed','DejaVu_Sans',sans-serif] text-[11px]">
      <header className="flex h-[32px] items-center bg-[#562f20] pr-[18px] pl-[7px] font-['Open_Sans',sans-serif] text-[12px] text-white">
        <Icon w={17} h={17}>
          <path d="M3 0h11l3 3v13H3z" fill="#dbe8f6" stroke="#9ab4d4" />
          <path d="M5 4h9v9H5zM5 7h9M5 10h9M8 4v9M11 4v9" stroke="#5a8ac4" />
          <circle cx="3" cy="13" r="3" fill="#8fc0dc" />
        </Icon>
        <h2 className="ml-[4px]">MOHOMAX_LISOD: РСУ расчетные [СНиП_1] (01)</h2>
        <div className="ml-auto flex items-center gap-[35px]">
          <button aria-label="Свернуть окно"><Icon w={10} h={11}><path d="M0 5.500h10" stroke="#fff" /></Icon></button>
          <button aria-label="Развернуть окно"><Icon w={10} h={11}><path d="M.5.500h9v9h-9z" stroke="#fff" /></Icon></button>
          <button aria-label="Закрыть окно"><Icon w={11} h={11}><path d="M0 0l10 10M10 0L0 10" stroke="#fff" /></Icon></button>
        </div>
      </header>
      <div className="font-['Open_Sans',sans-serif]">
        <ReportToolbar />
      </div>
      <div className="mr-[6px] ml-px flex flex-1 flex-col border-l-2 border-[#a0a0a0] bg-white pt-[6px] pl-[2px]">
        <div className="flex h-[60px] border border-[#828790] bg-white py-px pr-px">
          <textarea
            readOnly
            aria-label="Единицы измерения"
            className="block min-w-0 flex-1 resize-none overflow-hidden pt-px pl-[2px] leading-[13px] outline-none"
            value={UNITS}
          />
          <ScrollBar thumb="h-[17px]" />
        </div>
        <div className="flex items-stretch">
          <ResultsTable />
          <ScrollBar thumb="h-[72px]" />
        </div>
      </div>
      <nav className="flex h-[23px] items-start border-t border-[#dcdcdc] pl-[3px]">
        <button className="h-[20px] border-r border-[#dcdcdc] px-[5px]">Коэффициенты для РСУ</button>
        <button className="h-[21px] border-r border-[#dcdcdc] bg-white px-[6px] pt-[2px]">Стержни</button>
        <button className="h-[20px] border-r border-[#dcdcdc] px-[4px]">Пластины</button>
      </nav>
    </section>
  );
}

export default function App() {
  return (
    <div className="flex min-h-screen bg-white font-['Open_Sans','Noto_Sans',sans-serif] text-black">
      <MainWindow />
      <ReportWindow />
    </div>
  );
}
